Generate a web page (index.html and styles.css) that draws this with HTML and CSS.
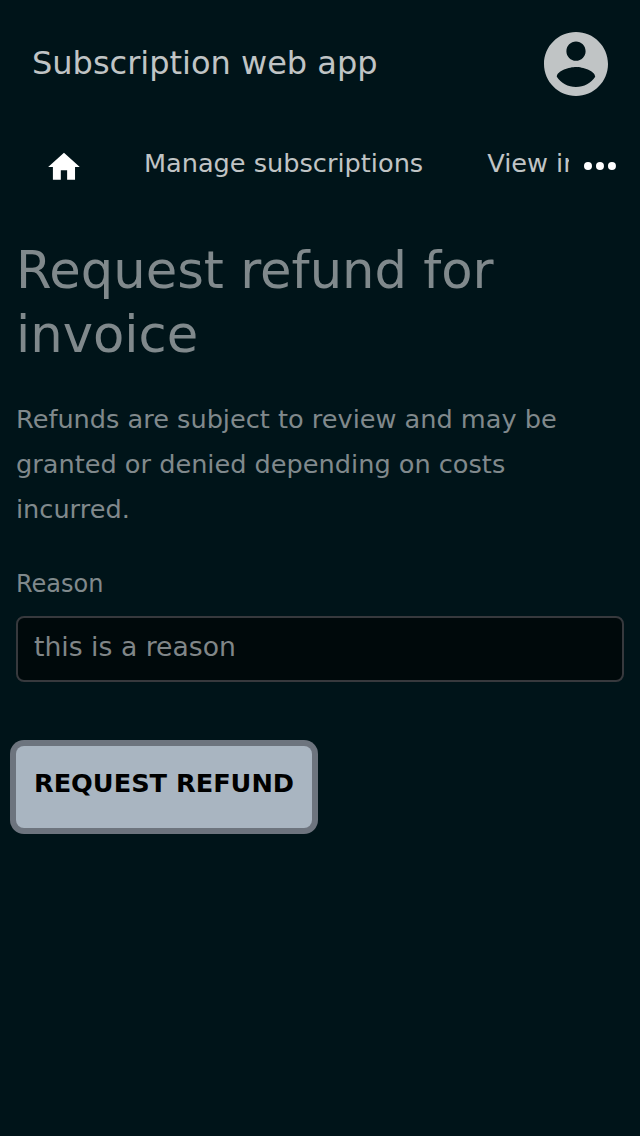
FILE: index.html
```html
<!DOCTYPE html>
<html lang="en">
<head>
<meta charset="utf-8">
<title>Subscription web app</title>
<link rel="stylesheet" href="styles.css">
</head>
<body>
<header class="top">
  <div class="brand">Subscription web app</div>
  <svg class="avatar" viewBox="2 2 20 20"><path d="M12 2C6.48 2 2 6.48 2 12s4.48 10 10 10 10-4.48 10-10S17.520 2 12 2zm0 3c1.660 0 3 1.340 3 3s-1.340 3-3 3-3-1.340-3-3 1.340-3 3-3zm0 14.200c-2.500 0-4.710-1.280-6-3.220.030-1.990 4-3.080 6-3.080 1.990 0 5.970 1.090 6 3.080-1.290 1.940-3.500 3.220-6 3.220z"/></svg>
</header>
<nav class="nav">
  <svg class="home" viewBox="0 0 24 24"><path d="M10 20v-6h4v6h5v-8h3L12 3 2 12h3v8z"/></svg>
  <a class="link">Manage subscriptions</a>
  <a class="link cut">View invoices</a>
  <svg class="more" viewBox="0 0 32 8"><circle cx="4" cy="4" r="4"/><circle cx="16" cy="4" r="4"/><circle cx="28" cy="4" r="4"/></svg>
</nav>
<main class="content">
  <h1 class="title">Request refund for invoice</h1>
  <p class="note">Refunds are subject to review and may be granted or denied depending on costs incurred.</p>
  <label class="label" for="reason">Reason</label>
  <input class="field" id="reason" type="text" value="this is a reason">
  <button class="submit" type="button">REQUEST REFUND</button>
</main>
</body>
</html>
```
FILE: styles.css
```css
* { box-sizing: border-box; }
body { margin: 0; min-height: 1136px; background: #001419; color: #80898c; font-family: "DejaVu Sans", sans-serif; overflow: hidden; }
.top { display: flex; justify-content: space-between; height: 128px; padding: 32px; }
.brand { font-size: 32px; line-height: 62px; color: #c0c4c5; }
.avatar { width: 64px; height: 64px; fill: #c0c4c5; }
.nav { display: flex; height: 72px; padding: 0 24px 0 45px; font-size: 25.600px; line-height: 71px; color: #c0c4c5; white-space: nowrap; }
.home { width: 38px; height: 38px; margin: 19.500px 61px 0 0; fill: #fff; }
.cut { width: 82px; margin-left: 64px; overflow: hidden; }
.more { width: 32px; height: 8px; margin: 34px 0 0 15px; fill: #fff; }
.content { padding: 38px 16px 0; }
.title { margin: 0; font-size: 51.200px; font-weight: 400; line-height: 64px; }
.note { margin: 31px 0 0; font-size: 25.600px; line-height: 45px; }
.label { display: block; margin-top: 34px; font-size: 24px; line-height: 36px; }
.field { display: block; width: 608px; height: 66px; margin-top: 14px; padding: 0 16px 6px; border: 2px solid #37393d; border-radius: 8px; outline: 0; background: #00090b; color: #808688; font: 26.667px "DejaVu Sans", sans-serif; }
.submit { display: block; width: 296px; height: 82px; margin-top: 64px; padding: 0 0 8px; border: 0; border-radius: 8px; background: #a9b5c1; box-shadow: 0 0 0 6px #6d747e; color: #000; font: bold 25.600px "DejaVu Sans", sans-serif; }
```
